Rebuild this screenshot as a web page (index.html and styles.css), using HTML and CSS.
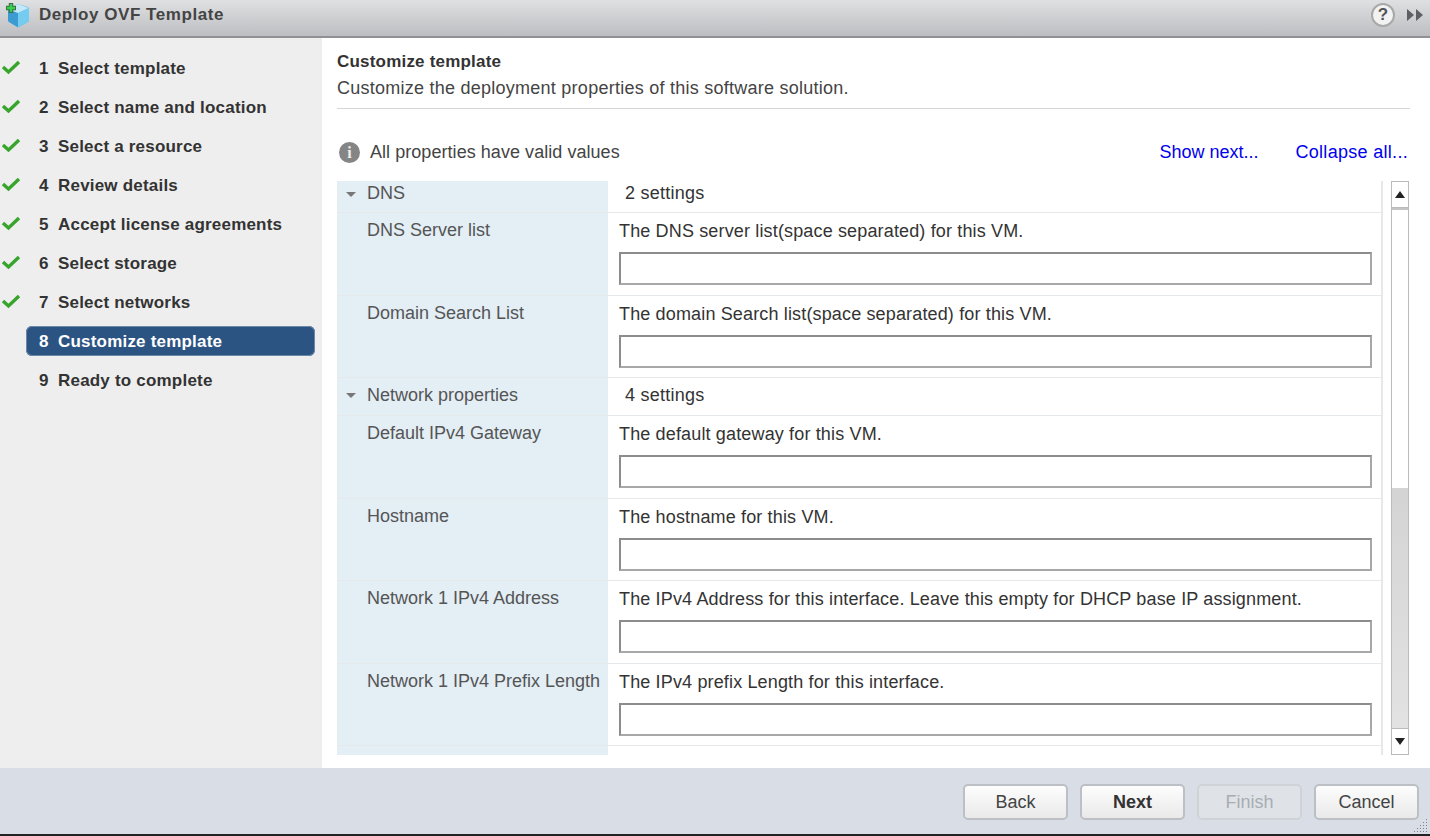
FILE: index.html
```html
<!DOCTYPE html>
<html lang="en">
<head>
  <meta charset="UTF-8">
  <title>Deploy OVF Template</title>
  <link rel="stylesheet" href="styles.css">
</head>
<body>
  <div class="dialog">
    <header class="titlebar">
      <svg class="logo" width="27" height="28" viewBox="0 0 27 28">
        <path d="M14 3 L24 6 Q25 6.500 25 8 L25 19 Q25 20.500 24 21 L15 26 Q14 26.500 13 26 L5 21 Q4 20.500 4 19 L4 8 Z" fill="#5cbce8"/>
        <path d="M4 8 L14 12 L14 26.300 L5 21 Q4 20.500 4 19 Z" fill="#3c9cd2"/>
        <path d="M14 3 L25 7 L14 12 L4 8 Z" fill="#c4e8f7"/>
        <path d="M14 12 L25 7 L25 19 Q25 20.500 24 21 L14 26.300 Z" fill="#74cdf0"/>
        <path d="M7 2 V12 M2 7 H12" stroke="#3f6b48" stroke-width="4.400"/>
        <path d="M7 3 V11 M3 7 H11" stroke="#35d04a" stroke-width="2.400"/>
      </svg>
      <span class="title">Deploy OVF Template</span>
      <span class="help">?</span>
      <svg class="forward" width="18" height="14" viewBox="0 0 18 14">
        <path d="M1 1 L8 7 L1 13 Z M10 1 L17 7 L10 13 Z" fill="#5c5f63"/>
      </svg>
    </header>

    <div class="main">
      <nav class="steps">
        <div class="step"><svg class="check" viewBox="0 0 20 16"><path d="M2 8 L7.500 13 L18 3" /></svg><span class="num">1</span>Select template</div>
        <div class="step"><svg class="check" viewBox="0 0 20 16"><path d="M2 8 L7.500 13 L18 3" /></svg><span class="num">2</span>Select name and location</div>
        <div class="step"><svg class="check" viewBox="0 0 20 16"><path d="M2 8 L7.500 13 L18 3" /></svg><span class="num">3</span>Select a resource</div>
        <div class="step"><svg class="check" viewBox="0 0 20 16"><path d="M2 8 L7.500 13 L18 3" /></svg><span class="num">4</span>Review details</div>
        <div class="step"><svg class="check" viewBox="0 0 20 16"><path d="M2 8 L7.500 13 L18 3" /></svg><span class="num">5</span>Accept license agreements</div>
        <div class="step"><svg class="check" viewBox="0 0 20 16"><path d="M2 8 L7.500 13 L18 3" /></svg><span class="num">6</span>Select storage</div>
        <div class="step"><svg class="check" viewBox="0 0 20 16"><path d="M2 8 L7.500 13 L18 3" /></svg><span class="num">7</span>Select networks</div>
        <div class="step active"><span class="num">8</span>Customize template</div>
        <div class="step"><span class="num">9</span>Ready to complete</div>
      </nav>

      <section class="content">
        <h2 class="heading">Customize template</h2>
        <p class="subheading">Customize the deployment properties of this software solution.</p>

        <div class="status">
          <span class="info">i</span>
          <span class="status-text">All properties have valid values</span>
          <a class="link first" href="#">Show next...</a>
          <a class="link last" href="#">Collapse all...</a>
        </div>

        <div class="props-wrap">
          <div class="props">
            <div class="row group dns">
              <div class="label"><i class="arrow"></i>DNS</div>
              <div class="value">2 settings</div>
            </div>
            <div class="row prop">
              <div class="label">DNS Server list</div>
              <div class="value"><div class="desc">The DNS server list(space separated) for this VM.</div><input class="field" type="text"></div>
            </div>
            <div class="row prop">
              <div class="label">Domain Search List</div>
              <div class="value"><div class="desc">The domain Search list(space separated) for this VM.</div><input class="field" type="text"></div>
            </div>
            <div class="row group net">
              <div class="label"><i class="arrow"></i>Network properties</div>
              <div class="value">4 settings</div>
            </div>
            <div class="row prop">
              <div class="label">Default IPv4 Gateway</div>
              <div class="value"><div class="desc">The default gateway for this VM.</div><input class="field" type="text"></div>
            </div>
            <div class="row prop">
              <div class="label">Hostname</div>
              <div class="value"><div class="desc">The hostname for this VM.</div><input class="field" type="text"></div>
            </div>
            <div class="row prop">
              <div class="label">Network 1 IPv4 Address</div>
              <div class="value"><div class="desc">The IPv4 Address for this interface. Leave this empty for DHCP base IP assignment.</div><input class="field" type="text"></div>
            </div>
            <div class="row prop">
              <div class="label">Network 1 IPv4 Prefix Length</div>
              <div class="value"><div class="desc">The IPv4 prefix Length for this interface.</div><input class="field" type="text"></div>
            </div>
            <div class="row tail">
              <div class="label"></div>
              <div class="value"></div>
            </div>
          </div>

          <div class="scrollbar">
            <div class="sb-btn"><i class="tri up"></i></div>
            <div class="sb-track"></div>
            <div class="sb-rest"></div>
            <div class="sb-btn down"><i class="tri dn"></i></div>
          </div>
        </div>
      </section>
    </div>

    <footer class="footer">
      <button class="btn">Back</button>
      <button class="btn next">Next</button>
      <button class="btn off">Finish</button>
      <button class="btn cancel">Cancel</button>
      <svg class="grip" width="14" height="14" viewBox="0 0 14 14">
        <path d="M12 1h1v1h-1zM12 4h1v1h-1zM9 4h1v1h-1zM12 7h1v1h-1zM9 7h1v1h-1zM6 7h1v1h-1zM12 10h1v1h-1zM9 10h1v1h-1zM6 10h1v1h-1zM3 10h1v1h-1zM12 13h1v1h-1zM9 13h1v1h-1zM6 13h1v1h-1zM3 13h1v1h-1zM0 13h1v1h-1z" fill="#7d828a"/>
      </svg>
    </footer>
  </div>
</body>
</html>
```
FILE: styles.css
```css
html, body { margin: 0; padding: 0; }
body { width: 1430px; height: 836px; overflow: hidden; background: #fff; font-family: "Liberation Sans", Arial, sans-serif; color: #333; }
.dialog { display: flex; flex-direction: column; height: 836px; }

.titlebar { display: flex; align-items: center; height: 30px; padding-bottom: 6px; flex: none; background: linear-gradient(#dfe0e2, #bcbec1); border-bottom: 2px solid #8f9194; }
.logo { margin-left: 4px; flex: none; }
.title { margin-left: 8px; font-size: 17px; font-weight: bold; color: #444; letter-spacing: 0.55px; }
.help { margin-left: auto; width: 20px; height: 20px; border-radius: 50%; background: #f2f2f2; border: 2px solid #a8a8a8; color: #555; font-size: 17px; font-weight: bold; line-height: 20px; text-align: center; }
.forward { margin: 0 6px 0 11px; }

.main { display: flex; flex: 1; min-height: 0; }
.steps { width: 322px; flex: none; background: #eee; padding-top: 15px; box-sizing: border-box; }
.step { position: relative; display: flex; align-items: center; height: 30px; box-sizing: border-box; padding-top: 2px; margin: 0 7px 9px 26px; padding-left: 13px; font-size: 17px; font-weight: bold; color: #333; border-radius: 6px; letter-spacing: 0.2px; }
.step.active { background: #2c5482; color: #fff; box-shadow: inset 0 0 0 1px #6c88a8; }
.num { width: 19px; flex: none; letter-spacing: 0; }
.check { position: absolute; left: -25px; top: 6px; width: 20px; height: 16px; fill: none; stroke: #37a52c; stroke-width: 3.4; }

.content { flex: 1; min-width: 0; padding: 13px 20px 0 15px; display: flex; flex-direction: column; }
.heading { margin: 0; font-size: 17px; line-height: 22px; color: #333; letter-spacing: 0.2px; }
.subheading { margin: 4px 0 0; font-size: 18px; line-height: 22px; padding-bottom: 9px; border-bottom: 1px solid #d5d5d5; color: #444; letter-spacing: 0.25px; }

.status { display: flex; align-items: center; height: 24px; margin-top: 31px; font-size: 18px; color: #444; }
.status-text { letter-spacing: 0.05px; }
.info { width: 21px; height: 21px; border-radius: 50%; background: #858585; color: #eee; font: bold 16px/21px "Liberation Serif", serif; text-align: center; margin: 0 10px 0 2px; }
.link { color: #0000ee; text-decoration: none; margin-left: 37px; }
.link.first { margin-left: auto; }
.link.last { margin-right: 2px; letter-spacing: 0.3px; }

.props-wrap { display: flex; flex: 1; min-height: 0; margin-top: 17px; margin-bottom: 13px; }
.props { width: 1044px; flex: none; border-right: 2px solid #e8e8e8; overflow: hidden; }
.row { display: flex; box-sizing: border-box; border-bottom: 1px solid #e6e9eb; }
.label { width: 271px; flex: none; background: #e3eef5; box-sizing: border-box; padding-left: 29px; font-size: 18px; color: #555; border-left: 1px solid #e9ecee; position: relative; }
.value { flex: 1; box-sizing: border-box; font-size: 18px; color: #333; letter-spacing: 0.15px; }
.group.dns { height: 32px; }
.group.net { height: 38px; }
.group .label { padding-top: 0; line-height: 24px; }
.group.net .label { padding-top: 5px; }
.group .value { padding: 0 0 0 17px; line-height: 24px; letter-spacing: 0.25px; }
.group.net .value { padding-top: 5px; }
.arrow { position: absolute; left: 8px; top: 11px; border: 5px solid transparent; border-top: 5px solid #777; border-bottom: 0; }
.group.net .arrow { top: 15px; }
.prop { height: 82.5px; }
.prop .label { padding-top: 6px; line-height: 22px; }
.prop .value { padding: 7px 10px 0 11px; }
.desc { line-height: 22px; }
.field { display: block; width: 753px; height: 33px; box-sizing: border-box; margin-top: 10px; border: 2px solid #8c8c8c; border-color: #8c8c8c #a8a8a8 #a8a8a8 #8c8c8c; background: #fff; padding: 0; }
.tail { flex: 1; height: 12px; border-bottom: 0; }

.scrollbar { width: 16px; flex: none; margin-left: 8px; display: flex; flex-direction: column; border: 1px solid #bbb; border-width: 0 1px; }
.sb-btn { height: 25px; flex: none; background: #fff; border: 1px solid #bbb; margin: 0 -1px; position: relative; }
.sb-track { height: 278px; flex: none; background: #fff; border-top: 2px solid #c4c4c4; }
.sb-rest { flex: 1; background: linear-gradient(#d4d4d4, #e2e2e2); }
.tri { position: absolute; left: 3px; top: 9px; border: 5px solid transparent; border-top: 0; border-bottom: 7px solid #222; }
.tri.dn { border-bottom: 0; border-top: 7px solid #222; }

.footer { position: relative; flex: none; height: 68px; box-sizing: border-box; background: #d9dee6; border-bottom: 2px solid #222; display: flex; justify-content: flex-end; align-items: flex-start; padding: 16px 11px 0 0; }
.btn { width: 105px; height: 36px; margin-left: 12px; border: 2px solid #bcc0c5; border-radius: 5px; background: linear-gradient(#fdfdfd, #e9e9e9); font: 18px "Liberation Sans", Arial, sans-serif; color: #444; padding: 0; }
.btn.next { font-weight: bold; color: #333; }
.btn.off { background: #dfe2e7; border-color: #cfd3d8; color: #a8adb2; }
.grip { position: absolute; right: 2px; bottom: 2px; }
```
